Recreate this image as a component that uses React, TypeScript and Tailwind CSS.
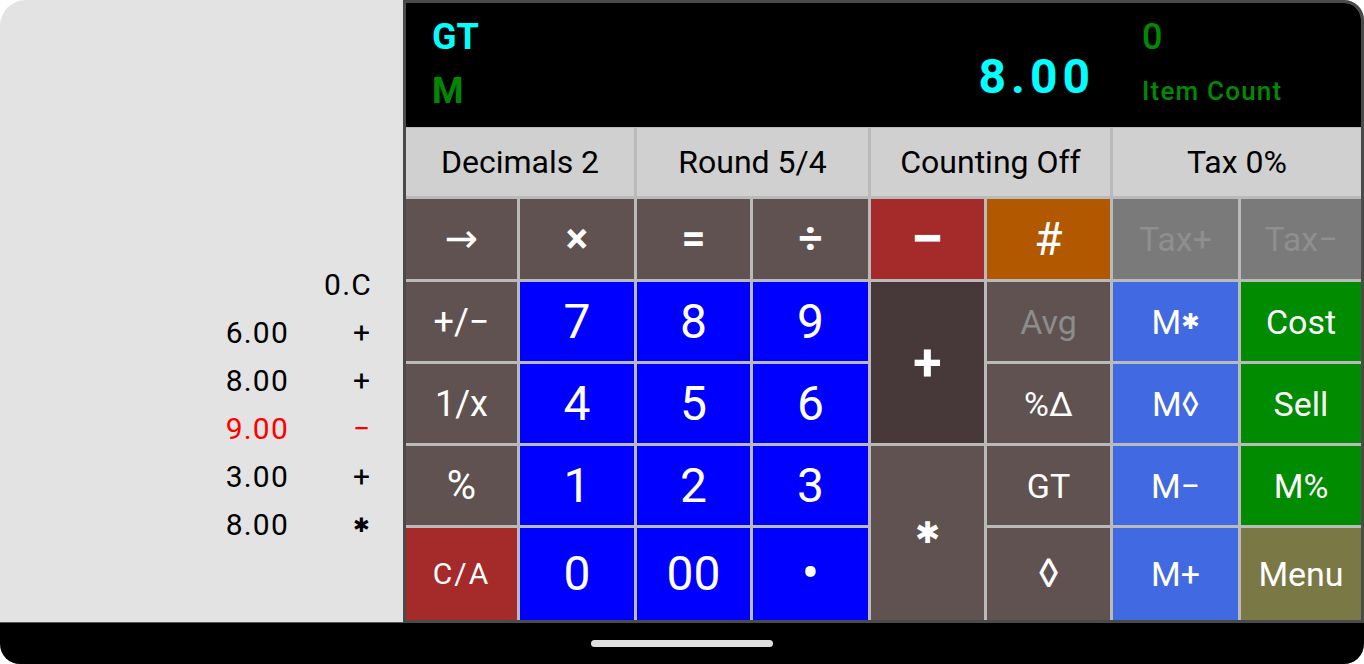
import React from 'react'

type Key = { label: React.ReactNode; cls: string }

const font = "font-['Roboto','Noto_Sans','DejaVu_Sans',sans-serif]"

// Colours taken from the calculator skin
const brown = 'bg-[#5f5250] text-white'
const blue = 'bg-[#0000ff] text-white text-[48px]'
const royal = 'bg-[#4169e1] text-white text-[34px]'
const green = 'bg-[#008b00] text-white text-[34px]'

const keys: Key[] = [
  // row 1
  { label: '→', cls: `${brown} text-[40px]` },
  { label: '×', cls: `${brown} text-[42px] font-bold` },
  { label: '=', cls: `${brown} text-[42px] font-bold` },
  { label: '÷', cls: `${brown} text-[42px] font-bold` },
  { label: '−', cls: 'bg-[#a52a2a] text-white text-[60px] font-bold' },
  { label: '#', cls: 'bg-[#b15800] text-white text-[46px]' },
  { label: 'Tax+', cls: 'bg-[#7a7a7a] text-[#8f8f8f] text-[34px]' },
  { label: 'Tax−', cls: 'bg-[#7a7a7a] text-[#8f8f8f] text-[34px]' },
  // row 2
  { label: '+/−', cls: `${brown} text-[36px]` },
  { label: '7', cls: blue },
  { label: '8', cls: blue },
  { label: '9', cls: blue },
  { label: '+', cls: 'bg-[#473939] text-white text-[52px] font-bold row-span-2' },
  { label: 'Avg', cls: 'bg-[#5f5250] text-[#8c8c8c] text-[34px]' },
  { label: <>M<span className="text-[22px]">✱</span></>, cls: royal },
  { label: 'Cost', cls: green },
  // row 3
  { label: '1/x', cls: `${brown} text-[36px]` },
  { label: '4', cls: blue },
  { label: '5', cls: blue },
  { label: '6', cls: blue },
  { label: '%Δ', cls: `${brown} text-[34px]` },
  { label: 'M◊', cls: royal },
  { label: 'Sell', cls: green },
  // row 4
  { label: '%', cls: `${brown} text-[40px]` },
  { label: '1', cls: blue },
  { label: '2', cls: blue },
  { label: '3', cls: blue },
  { label: '✱', cls: `${brown} text-[30px] row-span-2` },
  { label: 'GT', cls: `${brown} text-[34px]` },
  { label: 'M−', cls: royal },
  { label: 'M%', cls: green },
  // row 5
  { label: 'C/A', cls: 'bg-[#a52a2a] text-white text-[30px] tracking-[2px]' },
  { label: '0', cls: blue },
  { label: '00', cls: blue },
  { label: '•', cls: 'bg-[#0000ff] text-white text-[52px]' },
  { label: '◊', cls: `${brown} text-[40px]` },
  { label: 'M+', cls: royal },
  { label: 'Menu', cls: 'bg-[#7a7844] text-white text-[34px]' },
]

const tabs = ['Decimals 2', 'Round 5/4', 'Counting Off', 'Tax 0%']

const tape = [
  { num: '6.00', op: '+', red: false },
  { num: '8.00', op: '+', red: false },
  { num: '9.00', op: '−', red: true },
  { num: '3.00', op: '+', red: false },
  { num: '8.00', op: '✱', red: false },
]

export default function App() {
  return (
    <div className={`w-[1364px] h-[664px] bg-white flex flex-col overflow-hidden ${font}`}>
      <div className="flex h-[623px]">

        {/* Paper tape */}
        <div className="w-[403px] bg-[#e3e3e3] rounded-tl-[26px] border-b border-[#555] flex flex-col pt-[261px] text-[30px] tracking-[1.2px] text-black">
          <div className="h-[48px] leading-[48px] w-[372px] text-right">0.C</div>
          {tape.map((t, i) => (
            <div key={i} className={`h-[48px] leading-[48px] flex ${t.red ? 'text-[#ff0000]' : ''}`}>
              <span className="w-[289px] text-right">{t.num}</span>
              <span className={`ml-[55px] w-[36px] text-center ${t.op === '✱' ? 'text-[20px]' : ''}`}>{t.op}</span>
            </div>
          ))}
        </div>

        {/* Calculator */}
        <div className="flex-1 border-[3px] border-[#4a4a4a] rounded-tr-[20px] overflow-hidden bg-[#bababa] flex flex-col">
          <div className="h-[124px] bg-black flex">
            <div className="pl-[26px] pt-[16px] flex flex-col font-bold text-[36px] leading-[36px]">
              <span className="text-[#00ffff]">GT</span>
              <span className="mt-[18px] text-[#008800]">M</span>
            </div>
            <div className="flex-1 flex justify-end">
              <span className="pt-[50px] mr-[47px] text-[48px] leading-[48px] font-bold tracking-[5px] text-[#00ffff]">8.00</span>
            </div>
            <div className="w-[219px] pt-[16px] flex flex-col font-medium text-[#008a00]">
              <span className="text-[36px] leading-[36px]">0</span>
              <span className="mt-[23px] text-[26px] leading-[26px] tracking-[1.2px]">Item Count</span>
            </div>
          </div>

          <div className="mt-px grid grid-cols-[111px_114px_113px_115px_113px_123px_125px_120px] grid-rows-[68px_80px_79px_79px_79px_92px] gap-[3px]">
            {tabs.map(t => (
              <div key={t} className="col-span-2 bg-[#d0d0d0] flex items-center justify-center text-[32px] text-black">
                {t}
              </div>
            ))}
            {keys.map((k, i) => (
              <div key={i} className={`flex items-center justify-center leading-none ${k.cls}`}>
                {k.label}
              </div>
            ))}
          </div>
        </div>
      </div>

      {/* Navigation bar */}
      <div className="h-[41px] bg-black rounded-b-[20px] flex items-center justify-center">
        <div className="w-[182px] h-[7px] rounded-full bg-[#e0e0e0]" />
      </div>
    </div>
  )
}
